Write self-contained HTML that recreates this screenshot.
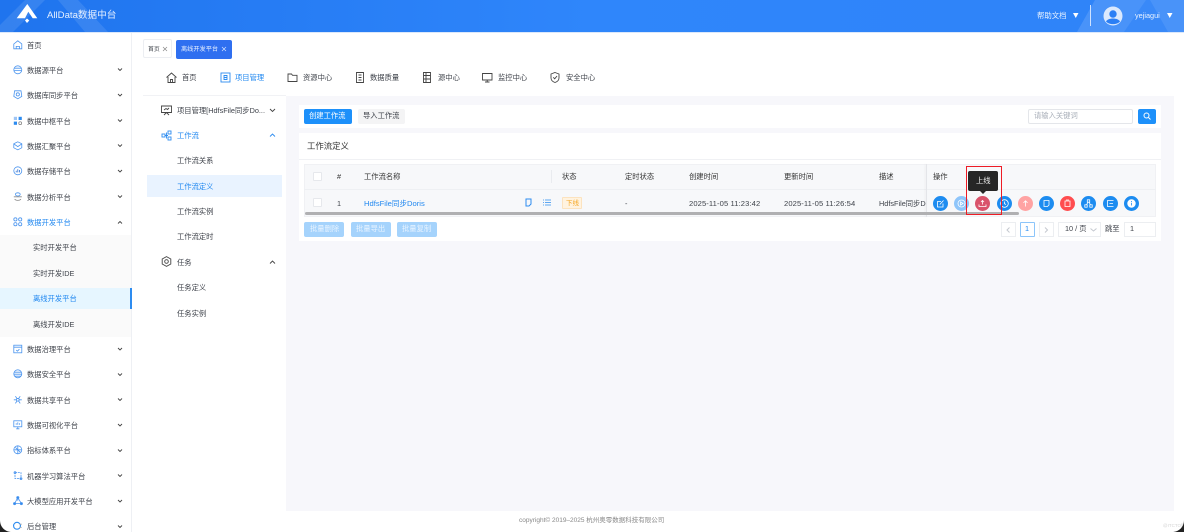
<!DOCTYPE html>
<html lang="zh"><head><meta charset="utf-8"><title>AllData</title>
<style>
html,body{margin:0;padding:0;width:1184px;height:532px;overflow:hidden;background:#fff}
body{font-family:"Liberation Sans","Noto Sans CJK SC",sans-serif;color:#515a6e}
#w{position:absolute;left:0;top:0;width:1184px;height:532px;overflow:hidden;filter:blur(.3px)}
.a,.t{position:absolute}
.t{white-space:nowrap;font-size:7.3px;line-height:12px;color:#3f434b}
.t.blue{color:#2188f0}
svg{position:absolute;overflow:visible}
.ic{fill:none;stroke:#4a94ee;stroke-width:1;transform:translate(0,1px) scale(.8);transform-origin:0 0}
.dk{fill:none;stroke:#444;stroke-width:.9}
.btn{position:absolute;width:15px;height:15px;border-radius:50%;top:196px;background:#1d8cf0}
.btn svg{left:0;top:0;fill:none;stroke:#fff;stroke-width:.8}
</style></head><body><div id="w">
<!-- header -->
<div class="a" style="left:0;top:0;width:1184px;height:32px;background:linear-gradient(90deg,#1f74ee,#2f86fb 50%,#2f83f8);overflow:hidden">
<svg style="left:0;top:0" width="1184" height="32"><path d="M0 25L25 0H45L13 32H0Z" fill="#fff" opacity=".1"/><path d="M58 0H78L108 32H85Z" fill="#fff" opacity=".1"/><path d="M1077 32L1095 0H1146L1124 32Z" fill="#fff" opacity=".13"/><path d="M1124 32L1146 0H1150L1168 32Z" fill="#fff" opacity=".05"/><path d="M1150 0H1184V32H1168Z" fill="#fff" opacity=".13"/></svg>
<svg style="left:0;top:0" width="60" height="32"><path d="M16.700 18.300L27.300 4 37.300 18.300H32.700L28.300 11.700 25 18.300Z" fill="#fff"/><path d="M27 18.500L29.300 20.500 27 23 25 20.500Z" fill="#fff"/></svg>
</div>
<div class="t" style="left:47px;top:10px;font-size:9.600px;color:#e6f0ff">AllData数据中台</div>
<div class="t" style="left:1037px;top:10px;color:#eaf3ff;font-size:7.400px">帮助文档</div>
<svg style="left:1073px;top:13px" width="6" height="5"><path d="M0 0H5.500L2.750 5Z" fill="#fff"/></svg>
<div class="a" style="left:1090px;top:5px;width:1px;height:21px;background:#cfe2ff"></div>
<svg style="left:1103px;top:6px" width="20" height="20"><circle cx="10" cy="10" r="9.500" fill="#dbe9fd"/><circle cx="10" cy="8" r="3.700" fill="#2b7ff5"/><path d="M3 15.500C5 11.500 15 11.500 17 15.500 14 19 6 19 3 15.500Z" fill="#2b7ff5"/></svg>
<div class="t" style="left:1135px;top:10px;color:#eaf3ff;font-size:7.300px">yejiagui</div>
<svg style="left:1167px;top:13px" width="6" height="5"><path d="M0 0H5.500L2.750 5Z" fill="#fff"/></svg>
<div class="a" style="left:0;top:32px;width:1184px;height:1px;background:#dbe8fb"></div>

<!-- sidebar -->
<div class="a" style="left:131px;top:33px;width:1px;height:499px;background:#eef0f4"></div>
<div class="a" style="left:0;top:235px;width:131px;height:102px;background:#fafafa"></div>
<div class="a" style="left:0;top:288px;width:131px;height:21px;background:#e6f6ff"></div>
<div class="a" style="left:130px;top:288px;width:2px;height:21px;background:#2d8cf0"></div>

<div class="t" style="left:27px;top:40px">首页</div>
<div class="t" style="left:27px;top:65px">数据源平台</div>
<div class="t" style="left:27px;top:90px">数据库同步平台</div>
<div class="t" style="left:27px;top:116px">数据中枢平台</div>
<div class="t" style="left:27px;top:141px">数据汇聚平台</div>
<div class="t" style="left:27px;top:166px">数据存储平台</div>
<div class="t" style="left:27px;top:192px">数据分析平台</div>
<div class="t blue" style="left:27px;top:217px">数据开发平台</div>
<div class="t" style="left:33px;top:242px">实时开发平台</div>
<div class="t" style="left:33px;top:268px">实时开发IDE</div>
<div class="t blue" style="left:33px;top:293px">离线开发平台</div>
<div class="t" style="left:33px;top:319px">离线开发IDE</div>
<div class="t" style="left:27px;top:344px">数据治理平台</div>
<div class="t" style="left:27px;top:369px">数据安全平台</div>
<div class="t" style="left:27px;top:395px">数据共享平台</div>
<div class="t" style="left:27px;top:420px">数据可视化平台</div>
<div class="t" style="left:27px;top:445px">指标体系平台</div>
<div class="t" style="left:27px;top:471px">机器学习算法平台</div>
<div class="t" style="left:27px;top:496px">大模型应用开发平台</div>
<div class="t" style="left:27px;top:521px">后台管理</div>

<!-- sidebar icons -->
<svg style="left:13px;top:39px" width="12" height="12" class="ic"><path d="M1 5L6 1 11 5V11H1ZM4 11V8H8V11"/></svg>
<svg style="left:13px;top:64px" width="12" height="12" class="ic"><ellipse cx="6" cy="6" rx="5" ry="5"/><path d="M1.500 4H10.500M1.500 7H10.500"/></svg>
<svg style="left:13px;top:89px" width="12" height="12" class="ic"><path d="M2 1H10L11 8 6 11 1 8Z"/><circle cx="6" cy="5.500" r="2"/></svg>
<svg style="left:13px;top:115px;transform:translate(0,1px) scale(.8);transform-origin:0 0" width="12" height="12"><rect x="1" y="1" width="4" height="4" fill="#9ec5f5"/><rect x="7" y="1" width="4" height="4" fill="#2d8cf0"/><rect x="1" y="7" width="4" height="4" fill="#2d8cf0"/><circle cx="9" cy="9" r="1.800" fill="none" stroke="#888"/></svg>
<svg style="left:13px;top:140px" width="12" height="12" class="ic"><path d="M6 1L11 3.500V8.500L6 11 1 8.500V3.500ZM1.500 4L6 7 10.500 4"/></svg>
<svg style="left:13px;top:165px" width="12" height="12" class="ic"><circle cx="6" cy="6" r="5"/><path d="M4 8V6M6 8V4M8 8V5" stroke="#2d6fd0"/></svg>
<svg style="left:13px;top:191px" width="12" height="12" class="ic"><ellipse cx="6" cy="3" rx="3" ry="2"/><path d="M1 6H11M2 9C4 11 8 11 10 9" stroke="#888"/></svg>
<svg style="left:13px;top:216px" width="12" height="12" class="ic"><circle cx="3" cy="3" r="2"/><circle cx="9" cy="3" r="2"/><circle cx="3" cy="9" r="2"/><circle cx="9" cy="9" r="2"/></svg>
<svg style="left:13px;top:343px" width="12" height="12" class="ic"><rect x="1" y="1.500" width="10" height="9.500"/><path d="M1 4H11M4 7.500L5.500 9 8 6.500"/></svg>
<svg style="left:13px;top:368px" width="12" height="12" class="ic"><circle cx="6" cy="6" r="5"/><path d="M1.500 4H10.500M1 6.500H11M2 9H10"/></svg>
<svg style="left:13px;top:394px" width="12" height="12" class="ic"><circle cx="6" cy="6" r="1.700"/><path d="M1 6H4M8 6H11M3 1.500L5 4.500M9 1.500L7 4.500M3 10.500L5 7.500M9 10.500L7 7.500"/></svg>
<svg style="left:13px;top:419px" width="12" height="12" class="ic"><rect x="1" y="1" width="10" height="7.500"/><path d="M6 8.500V11M4 11H8M4 6V4M6 6V3M8 6V4"/></svg>
<svg style="left:13px;top:444px" width="12" height="12" class="ic"><circle cx="6" cy="6" r="5"/><path d="M6 1V11M1.500 6H10.500M3 3L9 9"/></svg>
<svg style="left:13px;top:470px" width="12" height="12" class="ic"><path d="M2.500 2H10V9.500H2.500Z" stroke-dasharray="2.500 1"/><circle cx="2.500" cy="2" r="1.200"/><circle cx="10" cy="9.500" r="1.200"/></svg>
<svg style="left:13px;top:495px" width="12" height="12" class="ic"><path d="M6 2L2 9.500H10.500ZM6 6V2"/><circle cx="6" cy="2" r="1.400" fill="#2d8cf0"/><circle cx="2" cy="9.500" r="1.400" fill="#2d8cf0"/><circle cx="10.500" cy="9.500" r="1.400" fill="#2d8cf0"/></svg>
<svg style="left:13px;top:520px" width="12" height="12" class="ic"><circle cx="5" cy="6" r="4.300" stroke="#2d8cf0" stroke-width="1.400"/><path d="M8 4H11M8 8H11" stroke="#aaa"/></svg>

<!-- sidebar chevrons -->
<svg style="left:0;top:0" width="132" height="532" fill="none" stroke="#444" stroke-width=".9">
<path d="M118 68.500L120 70.500 122 68.500M118 94L120 96 122 94M118 119.500L120 121.500 122 119.500M118 144.500L120 146.500 122 144.500M118 170L120 172 122 170M118 195.500L120 197.500 122 195.500M118 223.500L120 221.500 122 223.500M118 348L120 350 122 348M118 373.500L120 375.500 122 373.500M118 398.500L120 400.500 122 398.500M118 424L120 426 122 424M118 449.500L120 451.500 122 449.500M118 474.500L120 476.500 122 474.500M118 500L120 502 122 500M118 525.500L120 527.500 122 525.500"/></svg>

<!-- tabs -->
<div class="a" style="left:143px;top:39px;width:29px;height:19px;border:1px solid #eceef2;border-radius:2px;box-sizing:border-box"></div>
<div class="t" style="left:148px;top:44px;font-size:5.900px">首页</div>
<svg style="left:163px;top:47px" width="4" height="4" fill="none" stroke="#888" stroke-width=".7"><path d="M0 0L4 4M4 0L0 4"/></svg>
<div class="a" style="left:176px;top:39.500px;width:55.500px;height:19px;background:#2f6ff0;border-radius:2px"></div>
<div class="t" style="left:181px;top:44px;font-size:6.200px;color:#e8f0ff">离线开发平台</div>
<svg style="left:222px;top:47px" width="4" height="4" fill="none" stroke="#d6e4ff" stroke-width=".7"><path d="M0 0L4 4M4 0L0 4"/></svg>

<!-- top nav -->
<svg style="left:166px;top:72px" width="11" height="11" class="dk"><path d="M.5 5.500L5.500 1 10.500 5.500M2 5V10.500H9V5M4.500 10.500V7.500H6.500V10.500"/></svg>
<div class="t" style="left:182px;top:72px">首页</div>
<svg style="left:220px;top:72px" width="11" height="11" fill="none" stroke="#2d8cf0" stroke-width=".9"><rect x="1" y="1" width="9" height="9"/><path d="M4 3.500H7V7.500H4ZM4 5.500H7"/></svg>
<div class="t blue" style="left:235px;top:72px">项目管理</div>
<svg style="left:287px;top:72px" width="11" height="11" class="dk"><path d="M1 2H4.500L5.500 3.300H10V9.500H1Z"/></svg>
<div class="t" style="left:303px;top:72px">资源中心</div>
<svg style="left:355px;top:72px" width="11" height="11" class="dk"><path d="M1.500 .5H8.500V10.500H1.500ZM3.500 3H6.500M3.500 5.500H6.500M3.500 8H6.500"/></svg>
<div class="t" style="left:370px;top:72px">数据质量</div>
<svg style="left:422px;top:72px" width="11" height="11" class="dk"><path d="M1.500 .5H8.500V10.500H1.500ZM1.500 3.500H8.500M1.500 7H8.500M4 .5V10.500"/></svg>
<div class="t" style="left:438px;top:72px">源中心</div>
<svg style="left:482px;top:72px" width="11" height="11" class="dk"><path d="M.5 1.500H10V8H.5ZM5.200 8V10M3 10H7.500"/></svg>
<div class="t" style="left:498px;top:72px">监控中心</div>
<svg style="left:550px;top:72px" width="11" height="11" class="dk"><path d="M5 .5L9 2V6C9 8.500 6.500 10 5 10.500 3.500 10 1 8.500 1 6V2ZM3.300 5.300L4.700 6.800 7 4"/></svg>
<div class="t" style="left:566px;top:72px">安全中心</div>

<div class="a" style="left:143px;top:95px;width:143px;height:1px;background:#f1f2f5"></div>

<!-- second menu -->
<svg style="left:161px;top:105px" width="11" height="11" class="dk"><path d="M.5 1H10.500V7.500H.5ZM3 10L5.500 7.500 8 10M3 5L5 3.500 6.500 4.500 8 3"/></svg>
<div class="t" style="left:177px;top:105px">项目管理[HdfsFile同步Do...</div>
<svg style="left:270px;top:109px" width="5" height="3" class="dk"><path d="M0 0L2.500 2.500 5 0"/></svg>
<svg style="left:161px;top:130px" width="11" height="11" fill="none" stroke="#2d8cf0" stroke-width=".9"><rect x="1" y="4" width="3" height="3"/><rect x="7" y="1" width="3" height="3"/><rect x="7" y="7" width="3" height="3"/><path d="M4 5.500H7M5.500 2.500V8.500"/></svg>
<div class="t blue" style="left:177px;top:130px">工作流</div>
<svg style="left:270px;top:134px" width="5" height="3" fill="none" stroke="#2d8cf0" stroke-width=".9"><path d="M0 2.500L2.500 0 5 2.500"/></svg>
<div class="t" style="left:177px;top:155px">工作流关系</div>
<div class="a" style="left:147px;top:175px;width:135px;height:22px;background:#e9f3ff"></div>
<div class="t blue" style="left:177px;top:181px">工作流定义</div>
<div class="t" style="left:177px;top:206px">工作流实例</div>
<div class="t" style="left:177px;top:231px">工作流定时</div>
<svg style="left:161px;top:256px" width="11" height="11" class="dk"><path d="M5.500 .6L9.800 3V8L5.500 10.400 1.200 8V3Z"/><circle cx="5.500" cy="5.500" r="1.800"/></svg>
<div class="t" style="left:177px;top:257px">任务</div>
<svg style="left:270px;top:261px" width="5" height="3" class="dk"><path d="M0 2.500L2.500 0 5 2.500"/></svg>
<div class="t" style="left:177px;top:282px">任务定义</div>
<div class="t" style="left:177px;top:308px">任务实例</div>
<div class="a" style="left:292px;top:326px;width:2px;height:39px;background:#b5b5b5"></div>

<!-- content bg -->
<div class="a" style="left:286px;top:96px;width:888px;height:415px;background:#f7f7fb"></div>
<div class="a" style="left:299px;top:105px;width:862px;height:23px;background:#fff"></div>
<div class="a" style="left:299px;top:133px;width:862px;height:108px;background:#fff"></div>
<div class="a" style="left:304px;top:109px;width:48px;height:15px;background:#1d90fa;border-radius:2px"></div>
<div class="t" style="left:309px;top:110px;color:#fff">创建工作流</div>
<div class="a" style="left:358px;top:109px;width:47px;height:15px;background:#f4f4f5;border-radius:2px"></div>
<div class="t" style="left:363px;top:110px">导入工作流</div>
<div class="a" style="left:1028px;top:109px;width:105px;height:15px;border:1px solid #e4e6ea;border-radius:2px;box-sizing:border-box"></div>
<div class="t" style="left:1034px;top:110px;color:#aab0ba">请输入关键词</div>
<div class="a" style="left:1138px;top:109px;width:18px;height:15px;background:#1d90fa;border-radius:2px"></div>
<svg style="left:1143px;top:112px" width="8" height="8" fill="none" stroke="#fff"><circle cx="3.500" cy="3.500" r="2.500"/><path d="M5.500 5.500L7.500 7.500"/></svg>

<div class="t" style="left:307px;top:140px;font-size:8.400px;color:#333">工作流定义</div>
<div class="a" style="left:299px;top:159px;width:862px;height:1px;background:#f0f1f4"></div>

<!-- table -->
<div class="a" style="left:304px;top:164px;width:852px;height:53px;background:#f7f8fa;border:1px solid #f0f1f4;box-sizing:border-box"></div>
<div class="a" style="left:304px;top:189px;width:852px;height:1px;background:#eef0f3"></div>
<div class="a" style="left:313px;top:172px;width:9px;height:9px;background:#fff;border:1px solid #e6e8ec;box-sizing:border-box;border-radius:1px"></div>
<div class="a" style="left:313px;top:198px;width:9px;height:9px;background:#fff;border:1px solid #e6e8ec;box-sizing:border-box;border-radius:1px"></div>
<div class="a" style="left:551px;top:170px;width:1px;height:13px;background:#e9ebef"></div>
<div class="t" style="left:337px;top:171px;color:#333">#</div>
<div class="t" style="left:364px;top:171px;color:#333">工作流名称</div>
<div class="t" style="left:562px;top:171px;color:#333">状态</div>
<div class="t" style="left:625px;top:171px;color:#333">定时状态</div>
<div class="t" style="left:689px;top:171px;color:#333">创建时间</div>
<div class="t" style="left:784px;top:171px;color:#333">更新时间</div>
<div class="t" style="left:879px;top:171px;color:#333">描述</div>
<div class="t" style="left:337px;top:198px">1</div>
<div class="t blue" style="left:364px;top:198px;font-size:7.600px">HdfsFile同步Doris</div>
<svg style="left:525px;top:198px" width="7" height="9" fill="none" stroke="#2d8cf0"><path d="M1 1H6V6L4 8H1Z"/></svg>
<svg style="left:543px;top:199px" width="8" height="7" fill="none" stroke="#2d8cf0" stroke-width=".8"><path d="M2 1H8M2 3.500H8M2 6H8M0 1H1M0 3.500H1M0 6H1"/></svg>
<div class="a" style="left:562px;top:197px;width:20px;height:12px;background:#fff3e0;border:1px solid #fce3bf;box-sizing:border-box;border-radius:1px"></div>
<div class="t" style="left:566px;top:198px;font-size:6.500px;color:#f5a623">下线</div>
<div class="t" style="left:625px;top:198px">-</div>
<div class="t" style="left:689px;top:198px;font-size:7.600px;letter-spacing:.1px">2025-11-05 11:23:42</div>
<div class="t" style="left:784px;top:198px;font-size:7.600px;letter-spacing:.1px">2025-11-05 11:26:54</div>
<div class="a" style="left:879px;top:197px;width:47px;height:14px;overflow:hidden"><div class="t" style="left:0;top:1px">HdfsFile同步Doris</div></div>
<div class="a" style="left:926px;top:164px;width:1px;height:53px;background:#e4e5e9;box-shadow:-1px 0 2px rgba(0,0,0,.06)"></div>
<div class="t" style="left:933px;top:171px;color:#333">操作</div>
<div class="a" style="left:305px;top:212px;width:714px;height:3px;background:#b0b0b2;border-radius:2px"></div>

<!-- action buttons -->
<div class="btn" style="left:933px"><svg width="15" height="15"><path d="M10 7.500V11H4.500V5.500H8M6.800 8.500L10.500 4.500"/></svg></div>
<div class="btn" style="left:954px;background:#8ec5fa"><svg width="15" height="15"><circle cx="7.500" cy="7.500" r="3.500"/><path d="M6.500 6V9L9 7.500Z"/></svg></div>
<div class="btn" style="left:975px;background:#d9536b"><svg width="15" height="15"><path d="M4 8.500V10.500H11V8.500M7.500 8.500V4.500M6 6L7.500 4.500 9 6"/></svg></div>
<div class="btn" style="left:997px"><svg width="15" height="15"><circle cx="7.500" cy="7.500" r="3.800"/><path d="M7.500 5.500V7.700L9 8.500"/></svg></div>
<div class="btn" style="left:1018px;background:#ffa3a3"><svg width="15" height="15"><path d="M7.500 10.500V4.800M5.500 6.800L7.500 4.800 9.500 6.800"/></svg></div>
<div class="btn" style="left:1039px"><svg width="15" height="15"><path d="M5 4.500H10V9L8.500 10.500H5Z"/></svg></div>
<div class="btn" style="left:1060px;background:#ff4d4f"><svg width="15" height="15"><path d="M5 5H10V10.500H5ZM6 4H9"/></svg></div>
<div class="btn" style="left:1081px"><svg width="15" height="15"><rect x="6.300" y="3.800" width="2.400" height="2.400"/><rect x="3.800" y="8.800" width="2.400" height="2.400"/><rect x="8.800" y="8.800" width="2.400" height="2.400"/><path d="M7 6.200L5.500 8.800M8 6.200L9.500 8.800"/></svg></div>
<div class="btn" style="left:1103px"><svg width="15" height="15"><path d="M10.500 4.500H4.500V10.500H10.500M6.500 7.500H10"/></svg></div>
<div class="btn" style="left:1124px"><svg width="15" height="15"><circle cx="7.500" cy="7.500" r="3.800" fill="#fff"/><path d="M7.500 6.800V9.500M7.500 5V6" stroke="#1d8cf0"/></svg></div>

<!-- tooltip -->
<div class="a" style="left:968px;top:171px;width:30px;height:20px;background:#262626;border-radius:2px"></div>
<svg style="left:980px;top:191px" width="6" height="3"><path d="M0 0H6L3 3Z" fill="#262626"/></svg>
<div class="t" style="left:976px;top:175px;color:#f0f0f0">上线</div>
<div class="a" style="left:966px;top:166px;width:36px;height:49px;border:1.500px solid #ee1c25;box-sizing:border-box"></div>

<!-- bottom buttons -->
<div class="a" style="left:304px;top:222px;width:40px;height:15px;background:#a5d3fc;border-radius:2px"></div>
<div class="t" style="left:310px;top:223px;color:#e9f4ff">批量删除</div>
<div class="a" style="left:351px;top:222px;width:40px;height:15px;background:#a5d3fc;border-radius:2px"></div>
<div class="t" style="left:356px;top:223px;color:#e9f4ff">批量导出</div>
<div class="a" style="left:397px;top:222px;width:40px;height:15px;background:#a5d3fc;border-radius:2px"></div>
<div class="t" style="left:402px;top:223px;color:#e9f4ff">批量复制</div>

<!-- pagination -->
<div class="a" style="left:1001px;top:222px;width:15px;height:15px;border:1px solid #eceef1;box-sizing:border-box"></div>
<svg style="left:1006px;top:227px" width="5" height="6" fill="none" stroke="#c4c8cf"><path d="M3.500 .5L1 3 3.500 5.500"/></svg>
<div class="a" style="left:1020px;top:222px;width:15px;height:15px;border:1px solid #8cc5fa;box-sizing:border-box;border-radius:1px"></div>
<div class="t blue" style="left:1025px;top:223px">1</div>
<div class="a" style="left:1039px;top:222px;width:15px;height:15px;border:1px solid #eceef1;box-sizing:border-box"></div>
<svg style="left:1044px;top:227px" width="5" height="6" fill="none" stroke="#c4c8cf"><path d="M1 .5L3.500 3 1 5.500"/></svg>
<div class="a" style="left:1058px;top:222px;width:43px;height:15px;border:1px solid #eceef1;box-sizing:border-box"></div>
<div class="t" style="left:1065px;top:223px">10 / 页</div>
<svg style="left:1090px;top:228px" width="7" height="4" fill="none" stroke="#c4c8cf"><path d="M.5 .5L3.500 3 6.500 .5"/></svg>
<div class="t" style="left:1105px;top:223px">跳至</div>
<div class="a" style="left:1124px;top:222px;width:32px;height:15px;border:1px solid #eceef1;box-sizing:border-box"></div>
<div class="t" style="left:1130px;top:223px">1</div>

<!-- footer -->
<div class="t" style="left:519px;top:515px;font-size:6.500px;color:#888">copyright© 2019–2025 杭州奥零数据科技有限公司</div>
<div class="t" style="left:1163px;top:520px;font-size:4.500px;color:#d5d5d5">@ITCTO博客</div>

<!-- screenshot corners -->
<svg style="left:0;top:520px" width="12" height="12"><path d="M0 0C0 7 5 12 12 12H0Z" fill="#222"/></svg>
<svg style="left:1172px;top:520px" width="12" height="12"><path d="M12 0C12 7 7 12 0 12H12Z" fill="#222"/></svg>
</div></body></html>
